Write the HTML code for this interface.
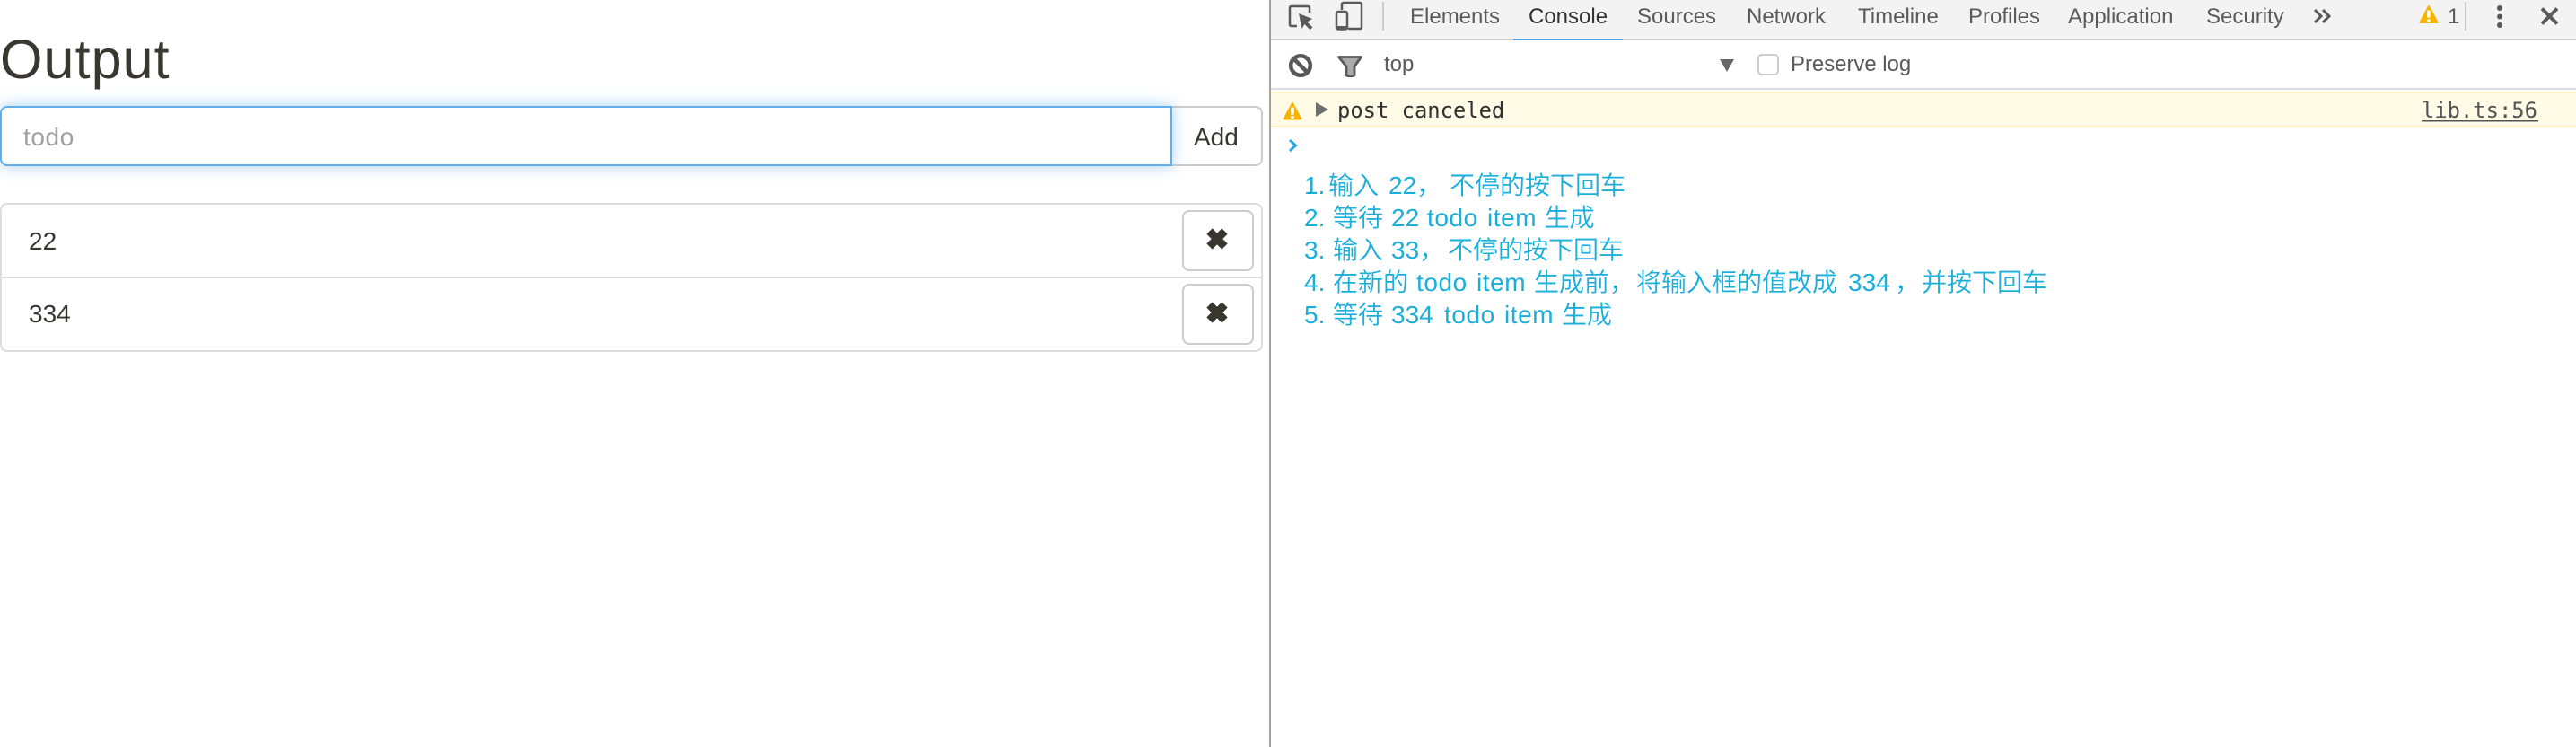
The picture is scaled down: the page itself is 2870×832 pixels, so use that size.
<!DOCTYPE html>
<html><head><meta charset="utf-8"><title>Output</title>
<style>
html,body{margin:0;padding:0;background:#fff;width:2870px;height:832px;overflow:hidden}
.a{position:absolute;box-sizing:border-box}
svg{position:absolute;left:0;top:0}
text{font-family:"Liberation Sans","Noto Sans CJK SC",sans-serif;white-space:pre}
.t{font-size:24px;fill:#5a5a5a}
.m{font-family:"DejaVu Sans Mono","Liberation Mono",monospace;font-size:23.8px}
.b{font-size:28px;fill:#1aaedb;font-weight:350}
.l{letter-spacing:.55px}
.d{font-size:28px;fill:#38362f}
</style></head><body>
<!-- left pane -->
<div class="a" style="left:1300px;top:118px;width:107px;height:67px;border:2px solid #ccc;border-radius:0 8px 8px 0"></div>
<div class="a" style="left:0;top:118px;width:1306px;height:67px;border:2px solid #63aee9;border-radius:8px 0 0 8px;background:#fff;box-shadow:0 0 16px rgba(102,175,233,.6)"></div>
<div class="a" style="left:0;top:226px;width:1407px;height:166px;border:2px solid #ddd;border-radius:8px"></div>
<div class="a" style="left:2px;top:308px;width:1403px;height:2px;background:#ddd"></div>
<div class="a" style="left:1317px;top:234px;width:80px;height:68px;border:2px solid #ccc;border-radius:8px"></div>
<div class="a" style="left:1317px;top:316px;width:80px;height:68px;border:2px solid #ccc;border-radius:8px"></div>
<!-- devtools -->
<div class="a" style="left:1414px;top:0;width:2px;height:832px;background:#a3a3a3"></div>
<div class="a" style="left:1416px;top:0;width:1454px;height:43px;background:#f3f3f3"></div>
<div class="a" style="left:1416px;top:43px;width:1454px;height:2px;background:#ccc"></div>
<div class="a" style="left:1686px;top:43px;width:122px;height:2px;background:#4aa3e8"></div>
<div class="a" style="left:1416px;top:98px;width:1454px;height:2px;background:#ddd"></div>
<div class="a" style="left:1416px;top:102px;width:1454px;height:40px;background:#fffbe6;border-top:2px solid #fff4c4;border-bottom:2px solid #fff4c4"></div>
<div class="a" style="left:1958px;top:60px;width:24px;height:24px;background:#fff;border:2px solid #ccc;border-radius:5px"></div>
<svg width="2870" height="832" viewBox="0 0 2870 832" xmlns="http://www.w3.org/2000/svg">
<text x="0" y="87" font-size="61" letter-spacing="1.1" fill="#3a3730">Output</text>
<text x="26" y="162" font-size="28" letter-spacing=".6" fill="#a0a0a0">todo</text>
<text class="d" x="1330" y="162">Add</text>
<text class="d" x="32" y="278">22</text>
<text class="d" x="32" y="359">334</text>
<g stroke="#38362f" stroke-width="9" fill="none">
<path d="M1347.500 257.500L1364.500 274.500M1364.500 257.500L1347.500 274.500"/>
<path d="M1347.500 339.500L1364.500 356.500M1364.500 339.500L1347.500 356.500"/>
</g>
<!-- tabs -->
<text class="t" x="1571" y="26">Elements</text>
<text class="t" x="1703" y="26" style="fill:#333">Console</text>
<text class="t" x="1824" y="26">Sources</text>
<text class="t" x="1946" y="26">Network</text>
<text class="t" x="2070" y="26">Timeline</text>
<text class="t" x="2193" y="26">Profiles</text>
<text class="t" x="2304" y="26">Application</text>
<text class="t" x="2458" y="26">Security</text>
<text class="t" x="2727" y="26">1</text>
<!-- inspect -->
<g fill="none" stroke="#5a5a5a" stroke-width="2.500">
<path d="M1445 29H1439Q1437 29 1437 27V9Q1437 7 1439 7H1457Q1459 7 1459 9V14"/>
</g>
<path d="M1447 15L1462 21L1456.500 24.500L1462.500 30.500L1459.500 33L1453.500 27L1450.500 32Z" fill="#5a5a5a"/>
<!-- device -->
<g fill="none" stroke="#5a5a5a" stroke-width="2.500">
<path d="M1495 11V5Q1495 3 1497 3H1515Q1517 3 1517 5V30Q1517 32 1515 32H1502"/>
<rect x="1489" y="13" width="12" height="19.500" rx="2"/>
</g>
<rect x="1489" y="29" width="12" height="4" fill="#5a5a5a"/>
<rect x="1540" y="2" width="2" height="32" fill="#ccc"/>
<!-- chevrons -->
<path d="M2579 11L2586 18L2579 25M2588 11L2595 18L2588 25" fill="none" stroke="#5a5a5a" stroke-width="3"/>
<!-- warning top -->
<path d="M2706 7L2715.500 25H2696.500Z" fill="#f4b400" stroke="#f4b400" stroke-width="2" stroke-linejoin="round"/>
<path d="M2706 11.500V19.500M2706 21.500V24.500" stroke="#fff" stroke-width="3.500"/>
<rect x="2746" y="2" width="2" height="32" fill="#ccc"/>
<circle cx="2785" cy="9" r="3" fill="#5a5a5a"/><circle cx="2785" cy="18.500" r="3" fill="#5a5a5a"/><circle cx="2785" cy="28" r="3" fill="#5a5a5a"/>
<path d="M2832 9.500L2849 26.500M2849 9.500L2832 26.500" stroke="#5a5a5a" stroke-width="4"/>
<!-- toolbar -->
<circle cx="1449" cy="73" r="10.800" fill="none" stroke="#5a5a5a" stroke-width="4.500"/>
<path d="M1441 65L1457 81" stroke="#5a5a5a" stroke-width="4.500"/>
<path d="M1491.500 63.500H1516.500L1509 74V84Q1504.500 85.500 1500 84V74Z" fill="#aaa" stroke="#5a5a5a" stroke-width="2.800" stroke-linejoin="round"/>
<text class="t" x="1542" y="79">top</text>
<path d="M1916 66H1932L1924 80Z" fill="#666"/>
<text class="t" x="1995" y="79" letter-spacing="-.05">Preserve log</text>
<!-- warning row -->
<path d="M1440 115L1449.500 132.500H1430.500Z" fill="#f4b400" stroke="#f4b400" stroke-width="2" stroke-linejoin="round"/>
<path d="M1440 119.500V127.500M1440 129V132" stroke="#fff" stroke-width="3.500"/>
<path d="M1466 114L1480 122L1466 130Z" fill="#6e6e6e"/>
<text class="m" x="1490" y="131" fill="#303030">post canceled</text>
<text class="m" x="2698" y="131" fill="#555">lib.ts:56</text>
<rect x="2698" y="134" width="130" height="1.500" fill="#555"/>
<path d="M1437 156L1443.500 162L1437 168" fill="none" stroke="#2aa8e6" stroke-width="3"/>
<!-- blue text -->
<text class="b" y="216"><tspan x="1453">1.</tspan><tspan x="1480">输入</tspan><tspan x="1547">22，</tspan><tspan x="1615">不停的按下回车</tspan></text>
<text class="b" y="252"><tspan x="1453">2.</tspan><tspan x="1485">等待</tspan><tspan x="1550">22</tspan><tspan class="l" x="1590">todo</tspan><tspan class="l" x="1657">item</tspan><tspan x="1720.500">生成</tspan></text>
<text class="b" y="288"><tspan x="1453">3.</tspan><tspan x="1485">输入</tspan><tspan x="1550">33，</tspan><tspan x="1613">不停的按下回车</tspan></text>
<text class="b" y="324"><tspan x="1453">4.</tspan><tspan x="1485">在新的</tspan><tspan class="l" x="1578">todo</tspan><tspan class="l" x="1645">item</tspan><tspan x="1709">生成前，</tspan><tspan x="1823">将输入框的值改成</tspan><tspan x="2059">334</tspan><tspan x="2111">，</tspan><tspan x="2141">并按下回车</tspan></text>
<text class="b" y="360"><tspan x="1453">5.</tspan><tspan x="1485">等待</tspan><tspan x="1550">334</tspan><tspan class="l" x="1609">todo</tspan><tspan class="l" x="1676">item</tspan><tspan x="1740">生成</tspan></text>
</svg>
</body></html>
